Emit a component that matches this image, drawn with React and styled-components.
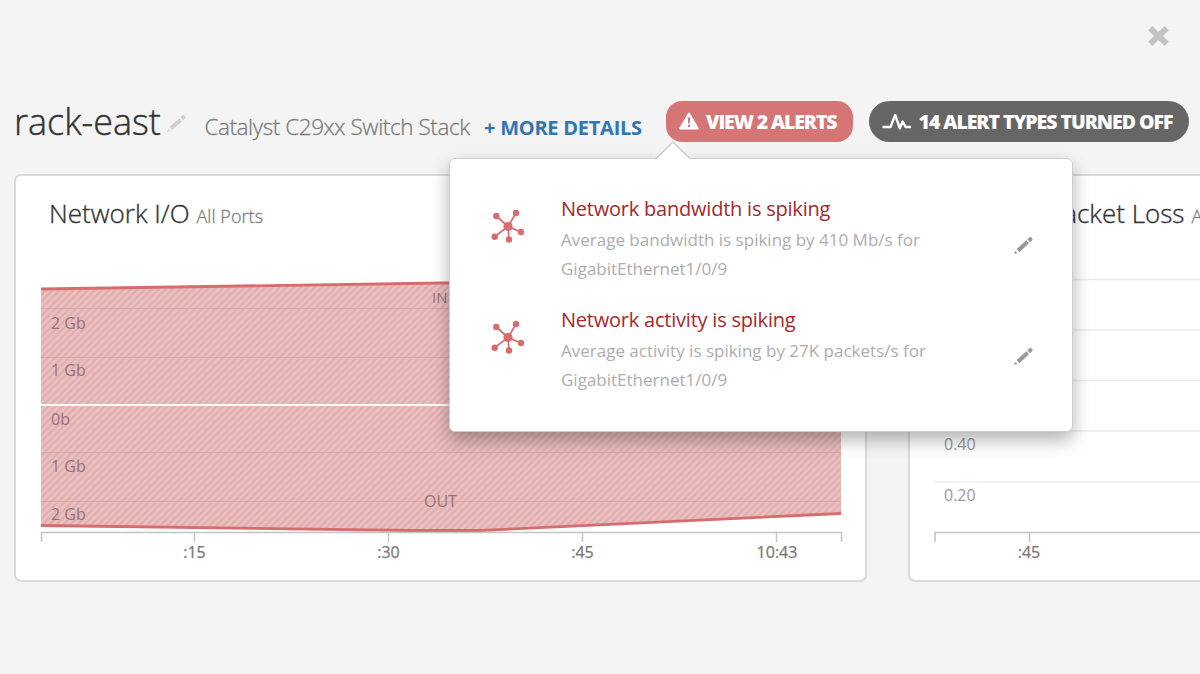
import React from "react";
import styled, { createGlobalStyle } from "styled-components";

const Global = createGlobalStyle`
  * { box-sizing: border-box; }
  body { margin: 0; background: #f4f4f4; overflow: hidden; font-family: "Open Sans", "Liberation Sans", sans-serif; }
`;

const Page = styled.div`
  position: relative;
  width: 1200px;
  height: 674px;
  overflow: hidden;
  background: #f4f4f4;
`;
const TopBar = styled.div`
  display: flex;
  justify-content: flex-end;
  height: 101px;
  padding: 25px 30px 0 0;
`;
const CloseButton = styled.button`
  width: 23px;
  height: 23px;
  padding: 0;
  border: 0;
  background: none;
`;
const Header = styled.header`
  display: flex;
  align-items: flex-start;
  height: 73px;
  padding-left: 14px;
  white-space: nowrap;
`;
const Title = styled.h1`
  flex: none;
  margin: 0;
  width: 152px;
  font-size: 36px;
  font-weight: 300;
  line-height: 42px;
  -webkit-text-stroke: 0.4px currentColor;
  color: #333;
`;
const EditSlot = styled.span`
  flex: none;
  width: 38.5px;
  padding-top: 12px;
  line-height: 0;
`;
const Model = styled.span`
  flex: none;
  width: 279.5px;
  font-size: 22.5px;
  font-weight: 300;
  line-height: 51px;
  letter-spacing: -0.43px;
  -webkit-text-stroke: 0.3px currentColor;
  color: #7b7b7b;
`;
const DetailsLink = styled.a`
  flex: none;
  width: 182px;
  font-size: 20px;
  font-weight: 700;
  line-height: 53px;
  letter-spacing: -0.25px;
  color: #3276b1;
`;
const Pill = styled.button`
  display: flex;
  align-items: center;
  width: ${(p) => p.$width}px;
  height: 40.5px;
  margin: 0 16px 0 0;
  padding: 0 0 0 13px;
  flex: none;
  gap: ${(p) => p.$gap}px;
  border: 0;
  border-radius: ${(p) => p.$radius}px;
  background: ${(p) => p.$color};
  color: #fff;
  font-family: inherit;
  font-size: 19.5px;
  font-weight: 800;
  line-height: 41px;
  letter-spacing: ${(p) => p.$spacing}px;
  white-space: nowrap;
`;
const Cards = styled.main`
  display: flex;
  gap: 41px;
  padding-left: 14px;
`;
const Card = styled.section`
  flex: none;
  width: ${(p) => p.$width}px;
  height: 408px;
  border: 2px solid #dadada;
  border-radius: 7px;
  background: #fff;
`;
const CardHead = styled.div`
  display: flex;
  align-items: baseline;
  height: 88px;
  padding: 19px 0 0 ${(p) => p.$indent}px;
  gap: 7px;
  white-space: nowrap;
`;
const CardTitle = styled.h2`
  margin: 0;
  font-size: 26px;
  font-weight: 300;
  line-height: 37px;
  -webkit-text-stroke: 0.35px currentColor;
  color: #333;
`;
const CardNote = styled.span`
  font-size: 18px;
  font-weight: 300;
  letter-spacing: 0.05px;
  -webkit-text-stroke: 0.3px currentColor;
  color: #7b7b7b;
`;
const Chart = styled.svg`
  display: block;
  margin-left: 24px;
  overflow: visible;
  font-size: 16px;
`;
const Popover = styled.aside`
  position: absolute;
  left: 449px;
  top: 158px;
  width: 624px;
  height: 274px;
  padding: 34px 38px 0 40px;
  border: 1px solid #cfcfcf;
  border-radius: 6px;
  background: #fff;
  box-shadow: 0 8px 18px rgba(0, 0, 0, 0.3);
`;
const Arrow = styled.svg`
  position: absolute;
  left: 205px;
  top: -18px;
`;
const AlertRow = styled.article`
  display: flex;
  height: 111px;
`;
const AlertIcon = styled.span`
  width: 71px;
  padding-top: 16px;
`;
const AlertBody = styled.div`
  flex: 1;
  white-space: nowrap;
`;
const AlertTitle = styled.h3`
  margin: 0;
  font-size: 20px;
  font-weight: 400;
  line-height: 32px;
  letter-spacing: -0.22px;
  color: #a5282c;
`;
const AlertText = styled.p`
  margin: 0;
  font-size: 17px;
  line-height: 29px;
  color: #adadad;
`;
const AlertEdit = styled.span`
  padding-top: 42px;
`;

const Pencil = ({ color }) => (
  <svg width="21" height="20" viewBox="0 0 21 20" fill={color}>
    <path d="M1 19 2.2 15.7 4.3 18Z" />
    <path d="M3.6 13.9 13.3 5.2 16 8.3 6.4 17.2Z" />
    <path d="M14.3 4.3 16.4 2.2Q17.4 1.4 18.3 2.3L19.3 3.4Q20.1 4.3 19.2 5.2L17.1 7.3Z" />
  </svg>
);

const Hub = () => (
  <svg width="36" height="36" viewBox="490 209 36 36" fill="#d66c6d" stroke="#d66c6d" display="block">
    <path d="M508 226.5 496.3 216M508 226.5 516 213M508 226.5 521 232M508 226.5 509 239.5M508 226.5 494.7 236.7" strokeWidth="1.7" />
    <g stroke="none">
      <circle cx="508" cy="226.5" r="4.6" />
      <circle cx="496.3" cy="216" r="3.2" />
      <circle cx="516" cy="213" r="3.2" />
      <circle cx="521" cy="232" r="3.2" />
      <circle cx="509" cy="239.5" r="3.2" />
      <circle cx="494.7" cy="236.7" r="3.2" />
    </g>
  </svg>
);

const alerts = [
  { title: "Network bandwidth is spiking", text: ["Average bandwidth is spiking by 410 Mb/s for", "GigabitEthernet1/0/9"] },
  { title: "Network activity is spiking", text: ["Average activity is spiking by 27K packets/s for", "GigabitEthernet1/0/9"] },
];
const ioGrid = [308.5, 357.5, 452.5, 501.5];
const ioLabels = [["2 Gb", 328.5], ["1 Gb", 376], ["0b", 425], ["1 Gb", 472], ["2 Gb", 519.5]];
const ioTimes = [[":15", 194.5], [":30", 388.5], [":45", 582.5], ["10:43", 777]];

const IoChart = () => (
  <Chart width="802" height="310" viewBox="40 264 802 310">
    <defs>
      <pattern id="hatch" width="7" height="7" patternUnits="userSpaceOnUse">
        <rect width="7" height="7" fill="#ecbfbf" />
        <path d="M-1 1 1 -1M-1 8 8 -1M6 8 8 6" stroke="#dfafb0" strokeWidth="2.2" />
      </pattern>
    </defs>
    <path d="M41 289 441 283 841 281V513L500 530 410 531 41 525.5Z" fill="url(#hatch)" />
    {ioGrid.map((y) => <path key={y} d={`M41 ${y}H841`} stroke="#d9a8a8" />)}
    <path d="M41 405H841" stroke="#fff" strokeWidth="2" />
    <path d="M41 289 441 283 841 281M41 525.5 410 530.5 480 530.5 841 513.5" fill="none" stroke="#d66c6d" strokeWidth="2.8" />
    <path d="M41.5 542V532.5H841.5V542M194.5 532.5V542M388.5 532.5V542M582.5 532.5V542M776.5 532.5V542" fill="none" stroke="#c4c4c4" strokeWidth="1.4" />
    <g fill="#96737a">
      {ioLabels.map(([t, y]) => <text key={y} x="51" y={y}>{t}</text>)}
      <text x="432" y="302.5" fontSize="15">IN</text>
      <text x="424" y="507">OUT</text>
    </g>
    <g fill="#777" stroke="#777" strokeWidth="0.25" textAnchor="middle">
      {ioTimes.map(([t, x]) => <text key={t} x={x} y="557.5">{t}</text>)}
    </g>
  </Chart>
);

const LossChart = () => (
  <Chart width="290" height="310" viewBox="934 264 290 310">
    {[279.5, 330, 380.5, 431, 482].map((y) => <path key={y} d={`M935 ${y}H1230`} stroke="#ececec" strokeWidth="1.3" />)}
    <path d="M935 542V532.5H1230M1029.5 532.5V542" fill="none" stroke="#c4c4c4" strokeWidth="1.6" />
    <g fill="#999">
      <text x="944" y="450">0.40</text>
      <text x="944" y="500.5">0.20</text>
    </g>
    <text x="1029" y="557.5" fill="#777" stroke="#777" strokeWidth="0.25" textAnchor="middle">:45</text>
  </Chart>
);

export default function App() {
  return (
    <Page>
      <Global />
      <TopBar>
        <CloseButton aria-label="Close">
          <svg width="23" height="23" viewBox="0 0 23 23" display="block">
            <path d="M3.3 3.3 19.7 18.7M19.7 3.3 3.3 18.7" stroke="#c4c4c4" strokeWidth="6" />
          </svg>
        </CloseButton>
      </TopBar>
      <Header>
        <Title>rack-east</Title>
        <EditSlot><Pencil color="#d0d0d0" /></EditSlot>
        <Model>Catalyst C29xx Switch Stack</Model>
        <DetailsLink>+ MORE DETAILS</DetailsLink>
        <Pill $width={186.5} $gap={7} $radius={16} $color="#d57575" $spacing={-1.12}>
          <svg width="20" height="18" viewBox="0 0 20 18">
            <path d="M10 1.5 18.8 16.5H1.2Z" fill="#fff" stroke="#fff" strokeWidth="2" strokeLinejoin="round" />
            <path d="M8.8 5.5H11.2L10.8 11.5H9.2ZM8.9 12.8H11.1V15H8.9Z" fill="#d57575" />
          </svg>
          VIEW 2 ALERTS
        </Pill>
        <Pill $width={320} $gap={7} $radius={20.5} $color="#666" $spacing={-1.05}>
          <svg width="30" height="20" viewBox="0 0 30 20">
            <path d="M0.5 16H8.5L13.2 4 17.8 17.3 20.6 10.5 23.6 16H29" fill="none" stroke="#fff" strokeWidth="2.4" strokeLinejoin="round" />
          </svg>
          14 ALERT TYPES TURNED OFF
        </Pill>
      </Header>
      <Cards>
        <Card $width={853}>
          <CardHead $indent={33}>
            <CardTitle>Network I/O</CardTitle>
            <CardNote>All Ports</CardNote>
          </CardHead>
          <IoChart />
        </Card>
        <Card $width={853}>
          <CardHead $indent={138}>
            <CardTitle>Packet Loss</CardTitle>
            <CardNote>All Ports</CardNote>
          </CardHead>
          <LossChart />
        </Card>
      </Cards>
      <Popover>
        <Arrow width="36" height="20" viewBox="0 0 36 20">
          <path d="M0 19 18 1 36 19Z" fill="#fff" />
          <path d="M0.5 18.2 18 1 35.5 18.2" fill="none" stroke="#c8cccf" strokeWidth="1.3" />
        </Arrow>
        {alerts.map((a) => (
          <AlertRow key={a.title}>
            <AlertIcon><Hub /></AlertIcon>
            <AlertBody>
              <AlertTitle>{a.title}</AlertTitle>
              {a.text.map((t) => <AlertText key={t}>{t}</AlertText>)}
            </AlertBody>
            <AlertEdit><Pencil color="#999" /></AlertEdit>
          </AlertRow>
        ))}
      </Popover>
    </Page>
  );
}
